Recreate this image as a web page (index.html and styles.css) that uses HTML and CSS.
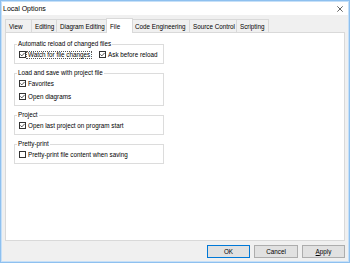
FILE: index.html
```html
<!DOCTYPE html>
<html lang="en">
<head>
    <meta charset="UTF-8">
    <title>Local Options</title>
    <link rel="stylesheet" href="styles.css">
</head>
<body>
    <div class="window">
        <div class="titlebar">
            <span class="title">Local Options</span>
            <svg class="close" viewBox="0 0 6 6"><path d="M0.3 0.3L5.7 5.7M5.7 0.3L0.3 5.7"/></svg>
        </div>

        <div class="main">
            <div class="tabs">
                <div class="tab tab-view">View</div>
                <div class="tab tab-editing">Editing</div>
                <div class="tab tab-diagram">Diagram Editing</div>
                <div class="tab tab-file active">File</div>
                <div class="tab tab-code">Code Engineering</div>
                <div class="tab tab-source">Source Control</div>
                <div class="tab tab-scripting">Scripting</div>
            </div>

            <div class="panel">
                <!-- Automatic reload -->
                <fieldset class="group">
                    <legend>Automatic reload of changed files</legend>
                    <div class="row">
                        <label class="check">
                            <span class="box"><svg viewBox="0 0 5 5"><path d="M0.4 2.4L1.8 3.9L4.6 0.9"/></svg></span>
                            <span class="text focus">Watch for file changes</span>
                        </label>
                        <label class="check">
                            <span class="box"><svg viewBox="0 0 5 5"><path d="M0.4 2.4L1.8 3.9L4.6 0.9"/></svg></span>
                            <span class="text">Ask before reload</span>
                        </label>
                    </div>
                </fieldset>

                <!-- Project file -->
                <fieldset class="group">
                    <legend>Load and save with project file</legend>
                    <div class="row">
                        <label class="check">
                            <span class="box"><svg viewBox="0 0 5 5"><path d="M0.4 2.4L1.8 3.9L4.6 0.9"/></svg></span>
                            <span class="text">Favorites</span>
                        </label>
                    </div>
                    <div class="row">
                        <label class="check">
                            <span class="box"><svg viewBox="0 0 5 5"><path d="M0.4 2.4L1.8 3.9L4.6 0.9"/></svg></span>
                            <span class="text">Open diagrams</span>
                        </label>
                    </div>
                </fieldset>

                <!-- Project -->
                <fieldset class="group">
                    <legend>Project</legend>
                    <div class="row">
                        <label class="check">
                            <span class="box"><svg viewBox="0 0 5 5"><path d="M0.4 2.4L1.8 3.9L4.6 0.9"/></svg></span>
                            <span class="text">Open last project on program start</span>
                        </label>
                    </div>
                </fieldset>

                <!-- Pretty-print -->
                <fieldset class="group">
                    <legend>Pretty-print</legend>
                    <div class="row">
                        <label class="check">
                            <span class="box"></span>
                            <span class="text">Pretty-print file content when saving</span>
                        </label>
                    </div>
                </fieldset>
            </div>

            <div class="buttons">
                <button class="btn default">OK</button>
                <button class="btn wide">Cancel</button>
                <button class="btn"><u>A</u>pply</button>
            </div>
        </div>
    </div>
</body>
</html>
```

FILE: styles.css
```css
* {
    box-sizing: border-box;
}

body {
    margin: 0;
    font-family: "Liberation Sans", Arial, sans-serif;
    font-size: 6.3px;
    color: #000;
    background-color: white;
}

.window {
    width: 350px;
    height: 263px;
    border: 1px solid #8ec0ef;
    box-shadow: inset 0 0 0 1px #c6e0f8;
    background-color: #f0f0f0;
    display: flex;
    flex-direction: column;
}

.titlebar {
    height: 13px;
    margin: 1px 1px 0;
    background-color: white;
    display: flex;
    align-items: center;
    justify-content: space-between;
    padding: 0 5px 0 1px;
}

.title {
    font-size: 7px;
}

.close {
    width: 6px;
    height: 6px;
    fill: none;
    stroke: #222;
    stroke-width: 0.7;
}

.main {
    flex: 1;
    padding: 4px 4px 0;
    display: flex;
    flex-direction: column;
}

.tabs {
    display: flex;
    align-items: flex-end;
    height: 13px;
}

.tab {
    height: 13px;
    padding: 0 0 0 3px;
    margin-left: -1px;
    border: 1px solid #d9d9d9;
    border-bottom: none;
    background-color: #f0f0f0;
    display: flex;
    align-items: center;
    white-space: nowrap;
    overflow: hidden;
}

.tab:first-child {
    margin-left: 0;
}

.tab-view { width: 27px; }
.tab-editing { width: 26px; }
.tab-diagram { width: 51px; }
.tab-file { width: 27px; }
.tab-code { width: 58px; padding-left: 2px; }
.tab-source { width: 48px; }
.tab-scripting { width: 33px; }

.tab.active {
    height: 15px;
    margin-bottom: -1px;
    background-color: white;
    position: relative;
    z-index: 1;
}

.panel {
    height: 209px;
    border: 1px solid #d9d9d9;
    background-color: white;
    padding: 7px 0 0 8px;
}

.group {
    width: 150px;
    min-width: 0;
    margin: 0 0 5px;
    padding: 0 0 2px 4px;
    border: 1px solid #dcdcdc;
}

.group legend {
    padding: 0 1px;
    margin-left: -2px;
    line-height: 8px;
}

.row {
    display: flex;
    align-items: center;
    height: 13px;
}

.check {
    display: flex;
    align-items: center;
}

.check + .check {
    margin-left: 7px;
}

.box {
    width: 7px;
    height: 7px;
    border: 1px solid #333;
    background-color: white;
    display: flex;
    align-items: center;
    justify-content: center;
}

.box svg {
    width: 5px;
    height: 5px;
    fill: none;
    stroke: #222;
    stroke-width: 0.8;
}

.text {
    padding: 0 1px;
    border: 1px dotted transparent;
    line-height: 6px;
    white-space: nowrap;
}

.text.focus {
    border-color: #555;
}

.buttons {
    display: flex;
    justify-content: flex-end;
    gap: 4px;
    padding-top: 4px;
}

.btn {
    width: 43px;
    height: 13px;
    padding: 0;
    font: inherit;
    color: #000;
    border: 1px solid #adadad;
    background-color: #e1e1e1;
}

.btn.wide {
    width: 44px;
}

.btn.default {
    border-color: #0078d7;
}
```
